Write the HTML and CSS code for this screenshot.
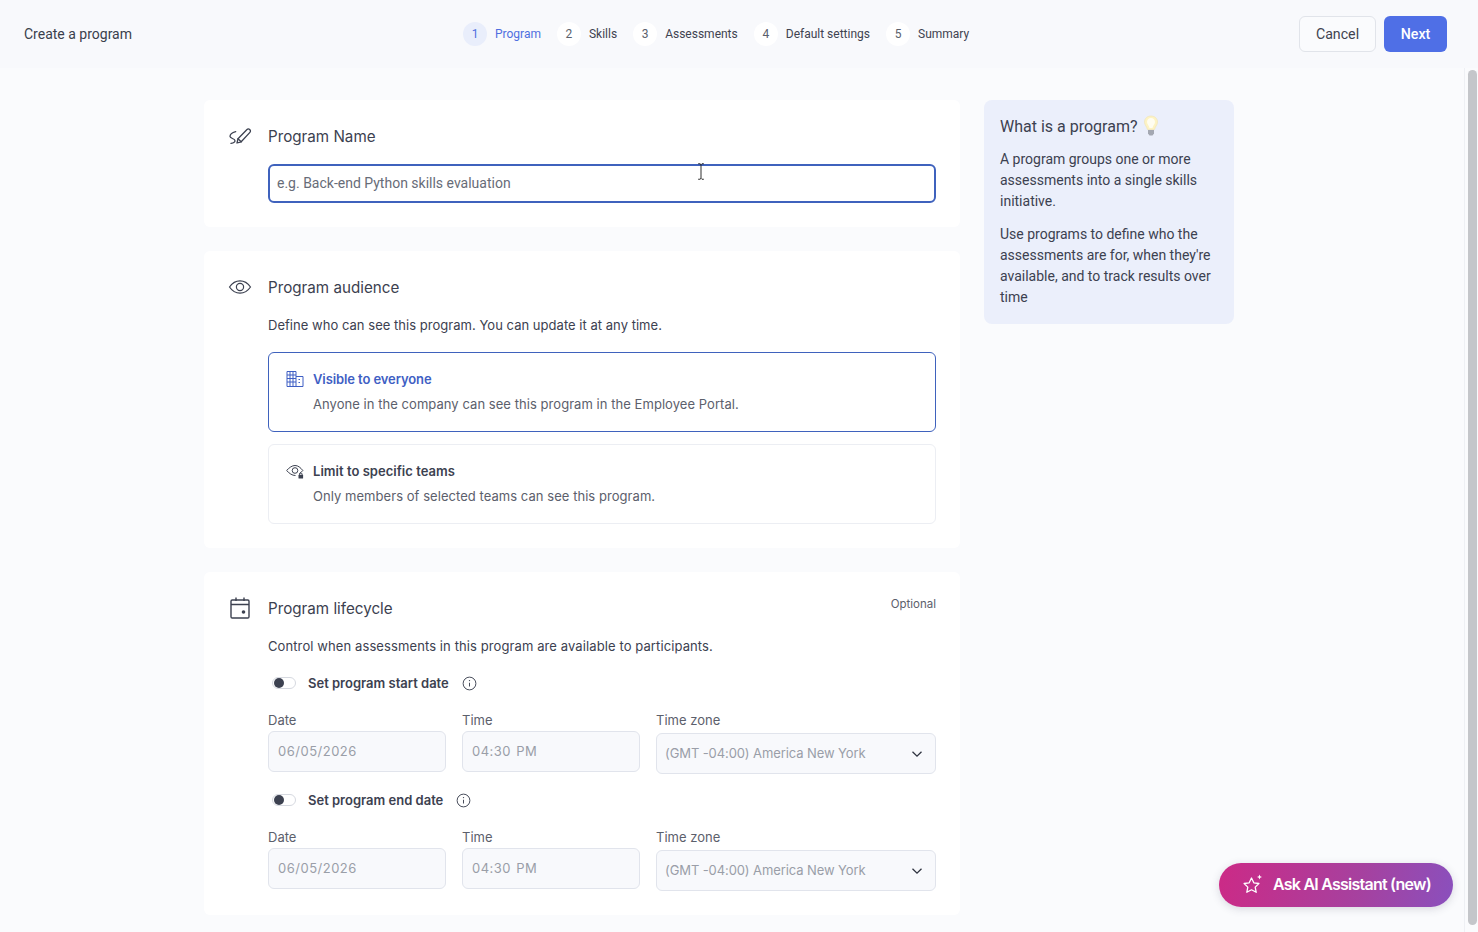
FILE: index.html
```html
<!DOCTYPE html>
<html lang="en">
<head>
    <meta charset="UTF-8">
    <meta name="viewport" content="width=device-width, initial-scale=1.0">
    <title>Create a program</title>
    <link rel="stylesheet" href="styles.css">
</head>
<body>
    <div class="header">
        <div class="header-title">Create a program</div>
        <div class="steps">
            <div class="step active"><span class="step-num">1</span><span class="step-label">Program</span></div>
            <div class="step"><span class="step-num">2</span><span class="step-label">Skills</span></div>
            <div class="step"><span class="step-num">3</span><span class="step-label">Assessments</span></div>
            <div class="step"><span class="step-num">4</span><span class="step-label">Default settings</span></div>
            <div class="step"><span class="step-num">5</span><span class="step-label">Summary</span></div>
        </div>
        <div class="header-actions">
            <button class="btn-cancel">Cancel</button>
            <button class="btn-next">Next</button>
        </div>
    </div>

    <div class="content">
        <div class="cards">
            <div class="card card-name">
                <div class="card-head">
                    <svg class="card-icon" viewBox="0 0 24 24" fill="none" stroke="#3c4150" stroke-width="1.300" stroke-linecap="round" stroke-linejoin="round">
                        <path d="M9 19l1-4.300L19 5.500a1.800 1.800 0 0 1 2.600 0l.3.3a1.800 1.800 0 0 1 0 2.600L13.200 17.800z"/>
                        <path d="M10 14.700l3.200 3.100"/>
                        <path d="M7.700 7.700C4.500 8.500 2 10.500 2 12.500c0 2 5 2 5 4.200 0 1.300-2 2.300-4 2.600"/>
                    </svg>
                    <h2 class="card-title">Program Name</h2>
                </div>
                <div class="card-body">
                    <input class="name-input" type="text" placeholder="e.g. Back-end Python skills evaluation">
                </div>
            </div>

            <div class="card card-audience">
                <div class="card-head">
                    <svg class="card-icon" viewBox="0 0 24 24" fill="none" stroke="#3c4150" stroke-width="1.200">
                        <path d="M1.500 12C4.300 7.900 8 5.800 12 5.800s7.700 2.100 10.500 6.200C19.700 16.100 16 18.200 12 18.200S4.300 16.100 1.500 12z"/>
                        <circle cx="12" cy="12" r="3.600"/>
                    </svg>
                    <h2 class="card-title">Program audience</h2>
                </div>
                <div class="card-body">
                    <p class="card-desc">Define who can see this program. You can update it at any time.</p>
                    <div class="option selected">
                        <svg class="option-icon" viewBox="0 0 18 18" fill="none" stroke="#3f5fc4" stroke-width="1">
                            <path d="M1 16.500V1.500h9v15zM10 6.500h7v10h-7"/>
                            <path d="M1 5h9M1 8.500h9M1 12h9M4 1.500v15M7 1.500v15"/>
                            <path d="M12.500 9.500h2M12.500 12.500h2" stroke-dasharray="1.500 1"/>
                        </svg>
                        <div class="option-text">
                            <div class="option-title">Visible to everyone</div>
                            <div class="option-sub">Anyone in the company can see this program in the Employee Portal.</div>
                        </div>
                    </div>
                    <div class="option">
                        <svg class="option-icon" viewBox="0 0 18 18" fill="none" stroke="#3c4150" stroke-width="1">
                            <path d="M13.500 11.500c1-.6 2-1.500 3.300-3C14.500 5.500 12 3.500 9 3.500S3.500 5.500.6 8.500C3.500 11.500 6 13.500 9.500 13.500"/>
                            <circle cx="9" cy="8.500" r="2.800"/>
                            <rect x="12.500" y="12.800" width="4.600" height="3.700" rx=".6" fill="#3c4150" stroke="none"/>
                            <path d="M13.500 13v-.7a1.300 1.300 0 0 1 2.600 0v.7"/>
                        </svg>
                        <div class="option-text">
                            <div class="option-title">Limit to specific teams</div>
                            <div class="option-sub">Only members of selected teams can see this program.</div>
                        </div>
                    </div>
                </div>
            </div>

            <div class="card card-lifecycle">
                <span class="optional">Optional</span>
                <div class="card-head">
                    <svg class="card-icon" viewBox="0 0 24 24" fill="none" stroke="#3c4150" stroke-width="1.400">
                        <rect x="3" y="4" width="18" height="18" rx="1.200"/>
                        <path d="M3 8.500h18M8 1.500V5M16 1.500V5"/>
                        <circle cx="15.500" cy="16" r="1.800" fill="#3c4150" stroke="none"/>
                    </svg>
                    <h2 class="card-title">Program lifecycle</h2>
                </div>
                <div class="card-body">
                    <p class="card-desc">Control when assessments in this program are available to participants.</p>

                    <div class="toggle-row">
                        <span class="toggle"><span class="toggle-knob"></span></span>
                        <span class="toggle-label">Set program start date</span>
                        <svg class="info-icon" viewBox="0 0 16 16" fill="none" stroke="#3c4150" stroke-width="1">
                            <circle cx="8" cy="8" r="6.800"/>
                            <path d="M8 7.200v4"/>
                            <circle cx="8" cy="4.900" r=".7" fill="#3c4150" stroke="none"/>
                        </svg>
                    </div>
                    <div class="date-row">
                        <div class="field">
                            <label>Date</label>
                            <div class="fake-input">06/05/2026</div>
                        </div>
                        <div class="field">
                            <label>Time</label>
                            <div class="fake-input">04:30 PM</div>
                        </div>
                        <div class="field field-zone">
                            <label>Time zone</label>
                            <div class="fake-select">
                                <span>(GMT -04:00) America New York</span>
                                <svg class="chevron" viewBox="0 0 12 8" fill="none" stroke="#2f3340" stroke-width="1.300"><path d="M1.500 1.800L6 6.200l4.500-4.400"/></svg>
                            </div>
                        </div>
                    </div>

                    <div class="toggle-row">
                        <span class="toggle"><span class="toggle-knob"></span></span>
                        <span class="toggle-label">Set program end date</span>
                        <svg class="info-icon" viewBox="0 0 16 16" fill="none" stroke="#3c4150" stroke-width="1">
                            <circle cx="8" cy="8" r="6.800"/>
                            <path d="M8 7.200v4"/>
                            <circle cx="8" cy="4.900" r=".7" fill="#3c4150" stroke="none"/>
                        </svg>
                    </div>
                    <div class="date-row">
                        <div class="field">
                            <label>Date</label>
                            <div class="fake-input">06/05/2026</div>
                        </div>
                        <div class="field">
                            <label>Time</label>
                            <div class="fake-input">04:30 PM</div>
                        </div>
                        <div class="field field-zone">
                            <label>Time zone</label>
                            <div class="fake-select">
                                <span>(GMT -04:00) America New York</span>
                                <svg class="chevron" viewBox="0 0 12 8" fill="none" stroke="#2f3340" stroke-width="1.300"><path d="M1.500 1.800L6 6.200l4.500-4.400"/></svg>
                            </div>
                        </div>
                    </div>
                </div>
            </div>
        </div>

        <div class="help-box">
            <h3 class="help-title">What is a program?
                <svg class="bulb" viewBox="0 0 16 22">
                    <path d="M8 1C4 1 1.500 3.800 1.500 7c0 3 2.300 4.500 3 7.500h7c.7-3 3-4.500 3-7.500C14.500 3.800 12 1 8 1z" fill="#fdf3c4" stroke="#f0e2ae" stroke-width=".6"/>
                    <path d="M8 3C5.500 3 4 5 4 7c0 2 2 3.500 2.500 6h3C10 10.500 12 9 12 7c0-2-1.500-4-4-4z" fill="#fffdf0"/>
                    <path d="M5 15h6v3.500l-1.500 2h-3L5 18.500z" fill="#a4a8b2"/>
                </svg>
            </h3>
            <p>A program groups one or more assessments into a single skills initiative.</p>
            <p>Use programs to define who the assessments are for, when they're available, and to track results over time</p>
        </div>
    </div>

    <svg class="text-cursor" viewBox="0 0 8 18" fill="none" stroke="#222" stroke-width="1"><path d="M1 .8h2l1 1 1-1h2M4 1.800v14.400M1 17.200h2l1-1 1 1h2"/></svg>

    <div class="scrollbar"><div class="scrollbar-thumb"></div></div>

    <button class="ai-button">
        <svg class="ai-icon" viewBox="0 0 20 20" fill="none" stroke="#fff" stroke-width="1.300" stroke-linejoin="round">
            <path d="M8.500 4l2.300 4.800 5.100.7-3.700 3.600 1 5.200-4.700-2.500-4.700 2.500 1-5.200L1.100 9.500l5.100-.7z"/>
            <path d="M16.500 .5l.7 1.800 1.800.7-1.800.7-.7 1.800-.7-1.800L14 3l1.800-.7z" fill="#fff" stroke="none"/>
        </svg>
        Ask AI Assistant (new)
    </button>
</body>
</html>
```

FILE: styles.css
```css
* {
    box-sizing: border-box;
}

html, body {
    height: 100%;
}

body {
    font-family: Inter, "Liberation Sans", sans-serif;
    margin: 0;
    padding: 0;
    height: 932px;
    overflow: hidden;
    background-color: #fafbfd;
    color: #3c4150;
    font-size: 13px;
}

.header {
    height: 68px;
    background-color: #f8f9fc;
    display: grid;
    grid-template-columns: 439px auto 1fr;
    align-items: center;
    padding: 0 31px 0 24px;
}

.header-title {
    font-family: Roboto, sans-serif;
    font-size: 14px;
    color: #3a3f4c;
}

.steps {
    display: flex;
    align-items: center;
    gap: 16px;
    font-family: Roboto, sans-serif;
    font-size: 12px;
    color: #3f4350;
}

.step {
    display: flex;
    align-items: center;
    gap: 8px;
}

.step-num {
    width: 24px;
    height: 24px;
    border-radius: 50%;
    background-color: #fff;
    display: flex;
    align-items: center;
    justify-content: center;
    color: #5a5f6c;
}

.step.active .step-num {
    background-color: #e9eefb;
    color: #4f6fe0;
}

.step.active .step-label {
    color: #4f6fe0;
}

.step-label {
    margin-top: -1px;
}

.header-actions {
    display: flex;
    justify-content: flex-end;
    gap: 8px;
}

button {
    font-family: Roboto, sans-serif;
    cursor: pointer;
}

.btn-cancel {
    width: 77px;
    height: 36px;
    border: 1px solid #e1e4ea;
    border-radius: 6px;
    background-color: #fafbfd;
    color: #3f4350;
    font-size: 14.2px;
}

.btn-next {
    width: 63px;
    height: 36px;
    border: none;
    border-radius: 6px;
    background-color: #4f6fe6;
    color: #fff;
    font-size: 14.2px;
    font-weight: 500;
}

.content {
    display: flex;
    align-items: flex-start;
    gap: 24px;
    padding: 32px 0 0 204px;
}

.cards {
    width: 756px;
    display: flex;
    flex-direction: column;
    gap: 24px;
}

.card {
    position: relative;
    background-color: #fff;
    border-radius: 6px;
    padding: 24px;
}

.card-name {
    height: 127px;
}

.card-audience {
    height: 297px;
}

.card-lifecycle {
    height: 343px;
}

.card-head {
    display: flex;
    align-items: center;
    gap: 16px;
    height: 24px;
}

.card-icon {
    width: 24px;
    height: 24px;
    flex-shrink: 0;
}

.card-title {
    margin: 0;
    font-family: Inter, sans-serif;
    font-size: 15.2px;
    font-weight: 400;
    color: #3c4150;
}

.card-body {
    margin-left: 40px;
}

.name-input {
    display: block;
    width: 100%;
    height: 39px;
    margin-top: 16px;
    padding: 0 7px 2px;
    border: 2px solid #3f62bd;
    border-radius: 6px;
    background-color: #fff;
    font-family: Roboto, sans-serif;
    font-size: 14px;
    outline: none;
}

.name-input::placeholder {
    color: #676c78;
    opacity: 1;
}

.card-desc {
    margin: 16px 0 0;
    line-height: 20px;
    color: #3c4150;
    letter-spacing: 0.03px;
}

.card-lifecycle .card-desc {
    letter-spacing: 0.1px;
}

.option {
    display: flex;
    gap: 9px;
    height: 80px;
    margin-top: 12px;
    padding: 16px 17px 0;
    border: 1px solid #eceef3;
    border-radius: 6px;
}

.card-desc + .option {
    margin-top: 17px;
}

.option.selected {
    border-color: #3f62bd;
}

.option-icon {
    width: 18px;
    height: 18px;
    margin-top: 1px;
    flex-shrink: 0;
}

.option-title {
    font-weight: 600;
    line-height: 20px;
    color: #3c4150;
    letter-spacing: 0.03px;
}

.selected .option-title {
    color: #3f5fc4;
    letter-spacing: -0.1px;
}

.option-sub {
    margin-top: 5px;
    line-height: 20px;
    color: #5c606c;
    letter-spacing: 0.05px;
}

.optional {
    position: absolute;
    top: 24px;
    right: 24px;
    font-size: 11.5px;
    line-height: 16px;
    color: #5c606c;
}

.toggle-row {
    display: flex;
    align-items: center;
    height: 20px;
    margin-top: 17px;
    padding-left: 4px;
}

.date-row + .toggle-row {
    margin-top: 16px;
}

.toggle {
    display: flex;
    align-items: center;
    width: 24px;
    height: 12px;
    padding-left: 1px;
    border: 1px solid #d6d9e0;
    border-radius: 6px;
    background-color: #fff;
}

.toggle-knob {
    width: 10px;
    height: 10px;
    border-radius: 50%;
    background-color: #3c4150;
}

.toggle-label {
    margin-left: 12px;
    font-weight: 600;
    color: #3c4150;
}

.info-icon {
    width: 15px;
    height: 15px;
    margin-left: 13px;
}

.date-row {
    display: grid;
    grid-template-columns: 178px 178px 280px;
    gap: 16px;
    margin-top: 17px;
}

.field label {
    display: block;
    line-height: 20px;
    color: #5c606c;
}

.fake-input {
    display: flex;
    align-items: center;
    height: 41px;
    margin-top: 1px;
    padding: 0 0 2px 9px;
    border: 1px solid #e1e4ec;
    border-radius: 6px;
    background-color: #f8f9fc;
    color: #9a9ea8;
    letter-spacing: 0.5px;
    word-spacing: 1px;
}

.fake-select {
    display: flex;
    align-items: center;
    justify-content: space-between;
    height: 41px;
    margin-top: 3px;
    padding: 0 12px 2px 8px;
    border: 1px solid #e1e4ec;
    border-radius: 6px;
    background-color: #f8f9fc;
    color: #9a9ea8;
    letter-spacing: -0.1px;
}

.chevron {
    width: 12px;
    height: 8px;
    margin-top: 2px;
}

.help-box {
    width: 250px;
    height: 224px;
    padding: 15px 16px;
    border-radius: 8px;
    background-color: #ebeffb;
    font-family: Roboto, sans-serif;
    color: #3c4150;
}

.help-title {
    display: flex;
    align-items: center;
    gap: 6px;
    margin: 0;
    height: 22px;
    font-size: 16px;
    font-weight: 400;
}

.bulb {
    width: 16px;
    height: 22px;
}

.help-box p {
    margin: 12px 0 0;
    font-size: 14px;
    line-height: 21px;
}

.text-cursor {
    position: absolute;
    left: 697px;
    top: 163px;
    width: 8px;
    height: 17px;
}

.scrollbar {
    position: absolute;
    top: 68px;
    right: 0;
    bottom: 0;
    width: 14px;
    padding: 2px 1px 7px 3px;
    border-left: 1px solid #eef0f4;
    background-color: #fafbfd;
}

.scrollbar-thumb {
    height: 100%;
    border-radius: 5px;
    background-color: #c4c6ca;
}

.ai-button {
    position: absolute;
    left: 1219px;
    top: 863px;
    display: flex;
    align-items: center;
    gap: 10px;
    width: 234px;
    height: 44px;
    padding: 0 0 2px 24px;
    border: none;
    border-radius: 22px;
    background: linear-gradient(100deg, #cc2a86 0%, #a6419f 60%, #8a50bd 100%);
    box-shadow: 0 2px 8px rgba(60, 60, 90, 0.18);
    color: #fff;
    font-family: Inter, sans-serif;
    font-size: 16px;
    font-weight: 600;
    letter-spacing: -0.76px;
}

.ai-icon {
    width: 20px;
    height: 20px;
}
```
